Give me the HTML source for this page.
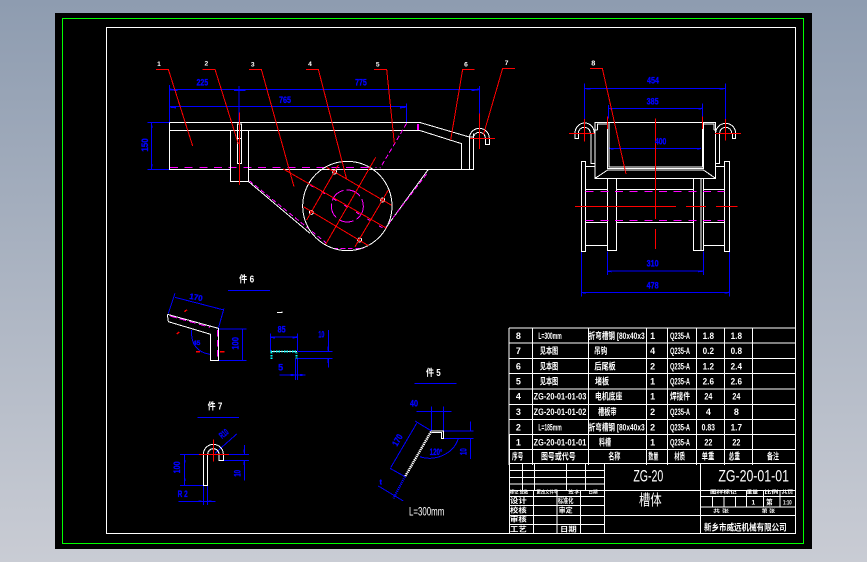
<!DOCTYPE html>
<html><head><meta charset="utf-8"><style>
html,body{margin:0;padding:0;width:867px;height:562px;overflow:hidden}
body{background:linear-gradient(#8e9cb0,#c9ccd4)}
svg{position:absolute;left:0;top:0;display:block;font-size:27px}
path,rect,circle{fill:none;stroke-width:3;shape-rendering:crispEdges}
.w{stroke:#fff}.b{stroke:#0000ff}.r{stroke:#f00}.m{stroke:#f0f;stroke-dasharray:24 20}.ms{stroke:#f0f}.c{stroke:#0ff;stroke-dasharray:4 4}
text{font-family:"Liberation Sans","Noto Sans CJK SC",sans-serif;text-anchor:middle;font-weight:bold}
.bt{fill:#0000ff;stroke:#0000ff;stroke-width:1}.wt{fill:#fff}
.n{font-weight:normal}
</style></head><body>
<svg width="867" height="562" viewBox="0 0 867 562">
<rect x="55" y="13" width="757" height="536" style="fill:#000;stroke:none"/>
<rect x="62.5" y="18.5" width="741" height="525" style="stroke:#0f0;stroke-width:1.2"/>
<rect x="106.5" y="27.5" width="689" height="506" style="stroke:#fff;stroke-width:1"/>

<!-- side view -->
<g transform="translate(130,50) scale(.33333)">
<path class="b" d="M118 105V217M327 108V217M1048 108V190M118 118H1048M118 170H830M830 160V217M52 217H118M52 358H118M65 217V358"/>
<path class="b" d="M118 118l24 3M1048 118l-24 3M312 120h34M118 170l20 3M830 170l-20 3M65 226v8M65 342v8" style="stroke-width:5"/>
<path class="m" d="M120 352H740"/>
<path class="w" d="M118 217H868L1018 261H1030M118 241H868L995 281V358M118 217V358H300M356 358H1030V250M1018 261V358M301 241V395H356V241M322 222H335V340H322ZM322 265H335M356 395L540 550M895 358L770 530"/>
<path class="m" d="M358 392L590 580M890 372L765 535M830 220L750 355M610 595H700" style="stroke-dasharray:14 8"/>
<path class="ms" d="M864 222V240" style="stroke-width:5"/>
<circle class="w" cx="652" cy="468" r="134"/>
<path class="w" d="M1018 265A30 30 0 0 1 1078 265V284H1066V265A18 18 0 0 0 1030 265"/>
<circle class="w" cx="614" cy="366" r="6"/><circle class="w" cx="758" cy="450" r="6"/><circle class="w" cx="544" cy="487" r="6"/><circle class="w" cx="689" cy="570" r="6"/>
<circle class="ms" cx="652" cy="468" r="48" style="stroke-dasharray:46 10"/>
<path class="m" d="M540 405L760 535M737 322L587 583" style="stroke-dasharray:12 28"/>
<path class="r" d="M78 58H115L188 288M217 58H255L325 282M357 58H394L492 410M528 58H565L650 388M732 58H770L793 280M1034 58H998L962 270M1155 55H1118L1060 255M328 188V405M1020 265H1095M1048 190V297"/>
<path class="r" d="M590 352L785 466M460 357L770 535M520 470L715 587M625 345L530 510M737 322L587 583M775 420L675 590"/>
<text class="bt" x="217" y="107" textLength="35" lengthAdjust="spacingAndGlyphs">225</text>
<text class="bt" x="693" y="107" textLength="35" lengthAdjust="spacingAndGlyphs">775</text>
<text class="bt" x="465" y="159" textLength="36" lengthAdjust="spacingAndGlyphs">765</text>
<text class="bt" x="0" y="0" transform="translate(54,285) rotate(-90)" textLength="40" lengthAdjust="spacingAndGlyphs">150</text>
<g style="font-size:20px"><text x="87" y="48" class="wt">1</text><text x="229" y="47" class="wt">2</text><text x="368" y="49" class="wt">3</text><text x="540" y="48" class="wt">4</text><text x="743" y="49" class="wt">5</text><text x="1008" y="49" class="wt">6</text><text x="1130" y="45" class="wt">7</text></g>
</g>

<!-- front view -->
<g transform="translate(560,50) scale(.33333)">
<path class="b" d="M73 100V217M496 100V217M73 115H497M146 165V205M427 160V205M146 175H427M148 295H423M143 605V675M430 605V675M143 663H430M64 605V740M508 605V740M64 727H508"/>
<path class="b" d="M73 115l18 2M497 115l-18 2M146 175l12 2M427 175l-12 2M148 295l12 2M423 295l-12 2M143 663l12 2M430 663l-16 2M64 727l14 2M508 727l-14 2" style="stroke-width:4"/>
<path class="w" d="M105 217H467V385H105ZM143 217V355H430V217M147 217V351H427V217M112 240V222H143M462 240V222H430M105 240H112M467 240H462M143 360H430M143 360L105 385M430 360L467 385"/>
<path class="w" d="M45 250A28 30 0 0 1 103 250M55 250A18 18 0 0 1 91 250M45 250V265H55V250M467 250A30 30 0 0 1 527 250M479 250A18 18 0 0 1 515 250M517 250V265H527V250M93 250V340H105M479 250V340H467"/>
<path class="w" d="M64 334H77V605H64ZM493 334H508V605H493ZM77 350H103M467 350H493M77 418H143M170 418H400M430 418H493M77 517H143M170 517H400M430 517H493M77 586H143M430 586H493M143 385V601H170V385M400 385V601H430V385M423 385V601"/>
<path class="m" d="M77 424H493M77 511H493"/>
<path class="r" d="M45 469H348M378 469H438M468 469H533M286 205V507M286 537V597M143 200V237M427 200V237M27 250H103M73 207V275M465 250H543M497 207V272M90 55H127L198 372"/>
<text class="bt" x="279" y="101" textLength="36" lengthAdjust="spacingAndGlyphs">454</text>
<text class="bt" x="278" y="164" textLength="36" lengthAdjust="spacingAndGlyphs">385</text>
<text class="bt" x="302" y="284" textLength="34" lengthAdjust="spacingAndGlyphs">400</text>
<text class="bt" x="278" y="649" textLength="36" lengthAdjust="spacingAndGlyphs">310</text>
<text class="bt" x="278" y="716" textLength="36" lengthAdjust="spacingAndGlyphs">478</text>
<text class="wt" x="100" y="47" style="font-size:22px">8</text>
</g>

<!-- part 6 + channel -->
<g transform="translate(150,265) scale(.33333)">
<text class="wt" x="290" y="52" textLength="45" lengthAdjust="spacingAndGlyphs" style="font-size:29px">件 6</text>
<path class="b" d="M234 76H360M55 145L75 85M75 97L222 135M205 190L222 130M205 192H290M205 286H290M277 192V286M125 195C122 235 140 262 180 268"/>
<path class="w" d="M52 148L205 190V286H182V208L55 170L52 148"/>
<path class="m" d="M60 153L180 187M203 195V275" style="stroke-dasharray:20 10"/>
<path class="r" d="M103 140l8-6M80 207l8-6M210 260H224M138 260H150" style="stroke-width:4"/>
<text class="bt" x="138" y="105" style="font-size:24px" transform="rotate(10 138 97)">170</text>
<text class="bt" x="0" y="0" transform="translate(265,235) rotate(-90)" textLength="38" lengthAdjust="spacingAndGlyphs">100</text>
<text class="bt" x="140" y="240" style="font-size:20px">45</text>
<path class="b" d="M361 205V258M442 205V258M361 216H442M442 259H548M442 280H548M535 195V258M535 280V308M437 280V345M442 280V345M388 330H467"/>
<path class="b" d="M361 216l14 2M442 216l-14 2M535 245v12M535 282v12M422 330h8M450 330h8" style="stroke-width:5"/>
<path class="w" d="M362 260H441"/>
<path class="c" d="M362 260H441M364 262V282M439 262V280" style="stroke-width:6"/>
<text class="bt" x="395" y="203" textLength="24" lengthAdjust="spacingAndGlyphs">85</text>
<text class="bt" x="514" y="218" textLength="18" lengthAdjust="spacingAndGlyphs">10</text>
<text class="bt" x="392" y="317">5</text>
<path class="w" d="M381 142H396V139"/>
</g>

<!-- parts 7, 5 -->
<g transform="translate(160,360) scale(.33333)">
<text class="wt" x="165" y="149" textLength="44" lengthAdjust="spacingAndGlyphs" style="font-size:29px">件 7</text>
<path class="b" d="M112 172H237M60 283H130M190 283H267M190 301H267M253 255V283M253 301V362M74 283V376M60 376H130M130 376V435M143 376V435M55 424H167M165 280L230 222"/>
<path class="b" d="M74 300v8M74 355v8M253 268v10M253 305v10M115 424h10M145 424h10" style="stroke-width:5"/>
<path class="w" d="M130 376V283A30 30 0 0 1 190 283V302H177V283A17 17 0 0 0 143 283V376Z"/>
<path class="r" d="M117 283H207M160 238V305"/>
<text class="bt" x="0" y="0" transform="translate(60,322) rotate(-90)" textLength="36" lengthAdjust="spacingAndGlyphs">100</text>
<text class="bt" x="0" y="0" transform="translate(241,340) rotate(-90)" textLength="20" lengthAdjust="spacingAndGlyphs">10</text>
<text class="bt" x="68" y="411" textLength="30" lengthAdjust="spacingAndGlyphs">R 2</text>
<text class="bt" x="0" y="0" transform="translate(197,228) rotate(-40)" textLength="28" lengthAdjust="spacingAndGlyphs">R10</text>

<text class="wt" x="820" y="48" textLength="44" lengthAdjust="spacingAndGlyphs" style="font-size:29px">件 5</text>
<path class="b" d="M763 70H890M815 140V213M850 140V213M770 154H875M850 213H940M850 235H940M932 185V213M932 235V297M765 183L813 212M690 325L735 350M770 190L692 323M655 378L730 423M895 235C880 285 820 305 780 290"/>
<path class="b" d="M735 350L700 415" style="stroke-width:7;stroke-dasharray:3 3"/>
<path class="w" d="M813 215L735 350" style="stroke-width:7;stroke-dasharray:4 2"/>
<path class="w" d="M813 213H850V235H844V217H816" />
<text class="bt" x="762" y="140" textLength="24" lengthAdjust="spacingAndGlyphs">40</text>
<text class="bt" x="0" y="0" transform="translate(720,245) rotate(-60)" textLength="36" lengthAdjust="spacingAndGlyphs">170</text>
<text class="bt" x="828" y="285" textLength="38" lengthAdjust="spacingAndGlyphs">120°</text>
<text class="bt" x="0" y="0" transform="translate(920,275) rotate(-90)" textLength="20" lengthAdjust="spacingAndGlyphs">10</text>
<text class="bt" x="662" y="374" style="font-size:22px">t</text>
<text class="wt n" x="800" y="467" textLength="106" lengthAdjust="spacingAndGlyphs" style="font-size:37px">L=300mm</text>
</g>

<!-- parts list -->
<g transform="translate(505,325) scale(.33333)">
<path class="w" d="M12 9H873M12 54H873M12 100H873M12 145H873M12 192H873M12 238H873M12 284H873M12 329H873M12 374H873M12 9V420M82 9V420M250 9V420M424 9V420M487 9V420M574 9V420M658 9V420M742 9V420"/>
<g style="font-size:27px">
<text class="wt" x="40" y="42">8</text><text class="wt" x="135" y="42" textLength="70" lengthAdjust="spacingAndGlyphs">L=300mm</text><text class="wt" x="335" y="42" textLength="168" lengthAdjust="spacingAndGlyphs">折弯槽钢 [80x40x3</text><text class="wt" x="443" y="42">1</text><text class="wt" x="525" y="42" textLength="60" lengthAdjust="spacingAndGlyphs">Q235-A</text><text class="wt" x="610" y="42" textLength="34" lengthAdjust="spacingAndGlyphs">1.8</text><text class="wt" x="694" y="42" textLength="34" lengthAdjust="spacingAndGlyphs">1.8</text>
<text class="wt" x="40" y="87">7</text><text class="wt" x="132" y="87" textLength="55" lengthAdjust="spacingAndGlyphs">见本图</text><text class="wt" x="287" y="87" textLength="40" lengthAdjust="spacingAndGlyphs">吊钩</text><text class="wt" x="443" y="87">4</text><text class="wt" x="525" y="87" textLength="60" lengthAdjust="spacingAndGlyphs">Q235-A</text><text class="wt" x="610" y="87" textLength="34" lengthAdjust="spacingAndGlyphs">0.2</text><text class="wt" x="694" y="87" textLength="34" lengthAdjust="spacingAndGlyphs">0.8</text>
<text class="wt" x="40" y="133">6</text><text class="wt" x="132" y="133" textLength="55" lengthAdjust="spacingAndGlyphs">见本图</text><text class="wt" x="300" y="133" textLength="64" lengthAdjust="spacingAndGlyphs">后尾板</text><text class="wt" x="443" y="133">2</text><text class="wt" x="525" y="133" textLength="60" lengthAdjust="spacingAndGlyphs">Q235-A</text><text class="wt" x="610" y="133" textLength="34" lengthAdjust="spacingAndGlyphs">1.2</text><text class="wt" x="694" y="133" textLength="34" lengthAdjust="spacingAndGlyphs">2.4</text>
<text class="wt" x="40" y="178">5</text><text class="wt" x="132" y="178" textLength="55" lengthAdjust="spacingAndGlyphs">见本图</text><text class="wt" x="291" y="178" textLength="42" lengthAdjust="spacingAndGlyphs">堵板</text><text class="wt" x="443" y="178">1</text><text class="wt" x="525" y="178" textLength="60" lengthAdjust="spacingAndGlyphs">Q235-A</text><text class="wt" x="610" y="178" textLength="34" lengthAdjust="spacingAndGlyphs">2.6</text><text class="wt" x="694" y="178" textLength="34" lengthAdjust="spacingAndGlyphs">2.6</text>
<text class="wt" x="40" y="224">4</text><text class="wt" x="165" y="224" textLength="158" lengthAdjust="spacingAndGlyphs">ZG-20-01-01-03</text><text class="wt" x="311" y="224" textLength="82" lengthAdjust="spacingAndGlyphs">电机底座</text><text class="wt" x="443" y="224">1</text><text class="wt" x="525" y="224" textLength="60" lengthAdjust="spacingAndGlyphs">焊接件</text><text class="wt" x="610" y="224" textLength="24" lengthAdjust="spacingAndGlyphs">24</text><text class="wt" x="694" y="224" textLength="24" lengthAdjust="spacingAndGlyphs">24</text>
<text class="wt" x="40" y="270">3</text><text class="wt" x="165" y="270" textLength="158" lengthAdjust="spacingAndGlyphs">ZG-20-01-01-02</text><text class="wt" x="307" y="270" textLength="55" lengthAdjust="spacingAndGlyphs">槽板带</text><text class="wt" x="443" y="270">2</text><text class="wt" x="525" y="270" textLength="60" lengthAdjust="spacingAndGlyphs">Q235-A</text><text class="wt" x="610" y="270">4</text><text class="wt" x="694" y="270">8</text>
<text class="wt" x="40" y="316">2</text><text class="wt" x="135" y="316" textLength="70" lengthAdjust="spacingAndGlyphs">L=185mm</text><text class="wt" x="335" y="316" textLength="168" lengthAdjust="spacingAndGlyphs">折弯槽钢 [80x40x3</text><text class="wt" x="443" y="316">2</text><text class="wt" x="525" y="316" textLength="60" lengthAdjust="spacingAndGlyphs">Q235-A</text><text class="wt" x="610" y="316" textLength="40" lengthAdjust="spacingAndGlyphs">0.83</text><text class="wt" x="694" y="316" textLength="34" lengthAdjust="spacingAndGlyphs">1.7</text>
<text class="wt" x="40" y="361">1</text><text class="wt" x="165" y="361" textLength="158" lengthAdjust="spacingAndGlyphs">ZG-20-01-01-01</text><text class="wt" x="300" y="361" textLength="36" lengthAdjust="spacingAndGlyphs">料槽</text><text class="wt" x="443" y="361">1</text><text class="wt" x="525" y="361" textLength="60" lengthAdjust="spacingAndGlyphs">Q235-A</text><text class="wt" x="610" y="361" textLength="24" lengthAdjust="spacingAndGlyphs">22</text><text class="wt" x="694" y="361" textLength="24" lengthAdjust="spacingAndGlyphs">22</text>
<text class="wt" x="38" y="404" textLength="34" lengthAdjust="spacingAndGlyphs">序号</text><text class="wt" x="160" y="404" textLength="104" lengthAdjust="spacingAndGlyphs">图号或代号</text><text class="wt" x="328" y="404" textLength="36" lengthAdjust="spacingAndGlyphs">名称</text><text class="wt" x="445" y="404" textLength="30" lengthAdjust="spacingAndGlyphs">数量</text><text class="wt" x="524" y="404" textLength="32" lengthAdjust="spacingAndGlyphs">材质</text><text class="wt" x="609" y="404" textLength="38" lengthAdjust="spacingAndGlyphs">单重</text><text class="wt" x="688" y="404" textLength="34" lengthAdjust="spacingAndGlyphs">总重</text><text class="wt" x="804" y="404" textLength="36" lengthAdjust="spacingAndGlyphs">备注</text>
</g>
</g>

<!-- title block -->
<g transform="translate(505,455) scale(.33333)">
<path class="w" d="M13 26H873M13 47H298M13 68H298M13 87H298M13 106H873M13 125H298M13 152H298M13 181H298M13 208H298M298 181H873M587 125H873M587 156H873M13 -60V237M298 26V237M587 26V237M52 26V106M88 26V106M185 26V106M242 26V106M86 106V237M156 106V237M226 106V237M622 125V156M657 125V156M692 125V156M725 106V156M775 106V156M825 106V156"/>
<g style="font-size:20px">
<text class="wt n" x="430" y="80" textLength="90" lengthAdjust="spacingAndGlyphs" style="font-size:50px">ZG-20</text>
<text class="wt n" x="746" y="80" textLength="212" lengthAdjust="spacingAndGlyphs" style="font-size:50px">ZG-20-01-01</text>
<text class="wt n" x="436" y="150" textLength="68" lengthAdjust="spacingAndGlyphs" style="font-size:44px">槽体</text>
<text class="wt" x="721" y="227" textLength="248" lengthAdjust="spacingAndGlyphs" style="font-size:27px">新乡市威远机械有限公司</text>
<text class="wt" x="42" y="116" textLength="55" lengthAdjust="spacingAndGlyphs" style="font-size:14px">标记 处数</text><text class="wt" x="127" y="116" textLength="65" lengthAdjust="spacingAndGlyphs" style="font-size:14px">更改文件号</text><text class="wt" x="207" y="116" textLength="35" lengthAdjust="spacingAndGlyphs" style="font-size:14px">签字</text><text class="wt" x="264" y="116" textLength="28" lengthAdjust="spacingAndGlyphs" style="font-size:14px">日期</text>
<text class="wt" x="40" y="144" textLength="50" lengthAdjust="spacingAndGlyphs">设计</text><text class="wt" x="182" y="144" textLength="47" lengthAdjust="spacingAndGlyphs">标准化</text>
<text class="wt" x="40" y="172" textLength="50" lengthAdjust="spacingAndGlyphs">校核</text><text class="wt" x="182" y="172" textLength="42" lengthAdjust="spacingAndGlyphs">审定</text>
<text class="wt" x="40" y="200" textLength="50" lengthAdjust="spacingAndGlyphs">审核</text>
<text class="wt" x="40" y="230" textLength="50" lengthAdjust="spacingAndGlyphs">工艺</text><text class="wt" x="190" y="230" textLength="50" lengthAdjust="spacingAndGlyphs">日期</text>
<text class="wt" x="655" y="116" textLength="80" lengthAdjust="spacingAndGlyphs" style="font-size:14px">图样标记</text><text class="wt" x="742" y="116" textLength="35" lengthAdjust="spacingAndGlyphs" style="font-size:14px">重量</text><text class="wt" x="799" y="116" textLength="42" lengthAdjust="spacingAndGlyphs" style="font-size:14px">比例</text><text class="wt" x="847" y="116" textLength="35" lengthAdjust="spacingAndGlyphs" style="font-size:14px">共页</text>
<text class="wt" x="745" y="148">1</text><text class="wt" x="793" y="148">第</text><text class="wt" x="847" y="148" textLength="26" lengthAdjust="spacingAndGlyphs">1:10</text>
<text class="wt" x="648" y="173" textLength="47" lengthAdjust="spacingAndGlyphs" style="font-size:14px">共 张</text><text class="wt" x="790" y="173" textLength="40" lengthAdjust="spacingAndGlyphs" style="font-size:14px">第 张</text>
</g>
</g>
</svg>
</body></html>
